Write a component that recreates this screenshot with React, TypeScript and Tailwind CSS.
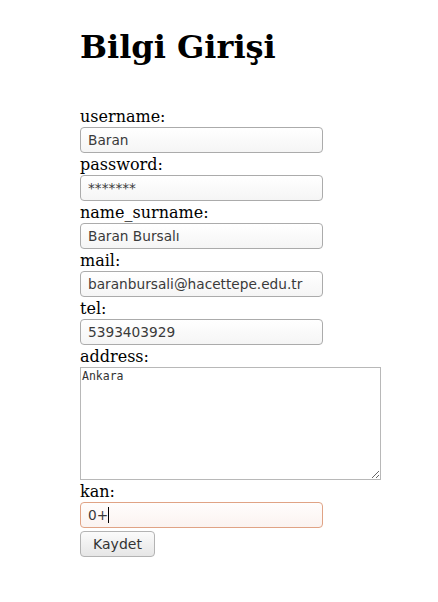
const FIELDS = [
  { label: "username:", value: "Baran" },
  { label: "password:", value: "*******" },
  { label: "name_surname:", value: "Baran Bursalı" },
  { label: "mail:", value: "baranbursali@hacettepe.edu.tr" },
  { label: "tel:", value: "5393403929" },
];

const inputCls =
  "block w-[243px] h-[26px] mt-px mb-[2px] px-[7px] rounded-[4px] border border-[#ababab] bg-linear-to-b from-white to-[#f5f5f5] text-[13.7px] text-[#3a3a3a] outline-none font-['DejaVu_Sans',sans-serif]";

export default function App() {
  return (
    <div className="min-h-[602px] bg-white pl-[80px] font-['DejaVu_Serif',serif] text-black">
      <h1 className="pt-[29px] mb-[41px] text-[32px] leading-[37px] font-bold">
        Bilgi Girişi
      </h1>

      <form onSubmit={(e) => e.preventDefault()}>
        {FIELDS.map((f) => (
          <div key={f.label}>
            <label className="block text-[16px] leading-[19px]">{f.label}</label>
            <input className={inputCls} defaultValue={f.value} />
          </div>
        ))}

        <label className="block text-[16px] leading-[19px]">address:</label>
        <textarea
          className="block w-[301px] h-[113px] mt-px mb-[2px] p-px border border-[#b8b8b8] bg-white text-[11.5px] leading-[14px] text-[#333] outline-none font-['DejaVu_Sans_Mono',monospace]"
          defaultValue="Ankara"
        />

        <label className="block text-[16px] leading-[19px]">kan:</label>
        <div className="flex items-center w-[243px] h-[26px] mt-px px-[7px] rounded-[4px] border border-[#e0a385] bg-linear-to-b from-[#fffdfc] to-[#fbf3f0] text-[13.7px] text-[#3a3a3a] font-['DejaVu_Sans',sans-serif]">
          <span>0+</span>
          <span className="inline-block w-px h-[16px] bg-black" />
        </div>

        <button
          type="submit"
          className="block mt-[3px] w-[75px] h-[26px] rounded-[4px] border border-[#b3b3b3] bg-linear-to-b from-[#fbfbfb] to-[#e6e6e6] text-[14px] text-[#333] font-['DejaVu_Sans',sans-serif]"
        >
          Kaydet
        </button>
      </form>
    </div>
  );
}
